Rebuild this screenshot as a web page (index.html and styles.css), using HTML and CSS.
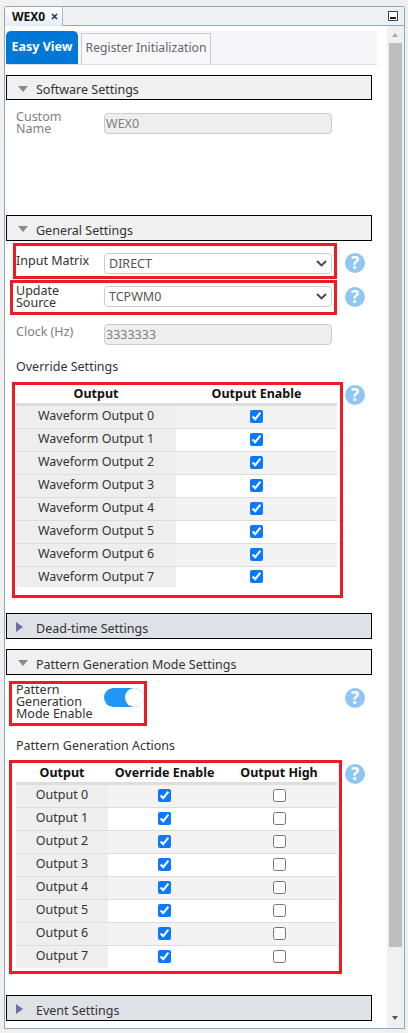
FILE: index.html
```html
<!DOCTYPE html>
<html lang="en">
<head>
  <meta charset="UTF-8">
  <title>WEX0</title>
  <link rel="stylesheet" href="styles.css">
</head>
<body>
  <div class="frame">
    <div class="tabbar">
      <div class="doc-tab">
        <span>WEX0</span>
        <svg class="doc-close" width="7" height="7" viewBox="0 0 7 7"><path d="M1 1l5 5M6 1l-5 5" stroke="#333" stroke-width="1.6"/></svg>
      </div>
      <svg class="minimize" width="10" height="10" viewBox="0 0 10 10"><rect x="0.5" y="0.5" width="9" height="9" fill="#fff" stroke="#444"/><rect x="2" y="6" width="6" height="2" fill="#222"/></svg>
    </div>

    <div class="body">
      <div class="content">
        <div class="view-tabs">
          <div class="view-tab active">Easy View</div>
          <div class="view-tab">Register Initialization</div>
        </div>

        <!-- Software Settings -->
        <div class="section-head first"><span class="arrow-down"></span>Software Settings</div>
        <div class="row custom-row">
          <div class="label muted">Custom<br>Name</div>
          <div class="input">WEX0</div>
        </div>

        <!-- General Settings -->
        <div class="section-head general"><span class="arrow-down"></span>General Settings</div>
        <div class="line line-matrix">
          <div class="marked row mark-matrix">
            <div class="label">Input Matrix</div>
            <div class="select">DIRECT
              <svg width="11" height="7" viewBox="0 0 11 7"><path d="M1 1l4.500 4.500L10 1" fill="none" stroke="#444" stroke-width="1.800"/></svg>
            </div>
          </div>
          <div class="help help-matrix">?</div>
        </div>
        <div class="line line-source">
          <div class="marked row mark-source">
            <div class="label">Update<br>Source</div>
            <div class="select">TCPWM0
              <svg width="11" height="7" viewBox="0 0 11 7"><path d="M1 1l4.500 4.500L10 1" fill="none" stroke="#444" stroke-width="1.800"/></svg>
            </div>
          </div>
          <div class="help help-source">?</div>
        </div>
        <div class="row clock-row">
          <div class="label muted">Clock (Hz)</div>
          <div class="input">3333333</div>
        </div>
        <div class="group-title override-title">Override Settings</div>
        <div class="line">
          <div class="marked mark-override">
            <table class="grid wave-grid">
              <thead><tr><th class="col-name">Output</th><th>Output Enable</th></tr></thead>
              <tbody>
                <tr><td class="col-name">Waveform Output 0</td><td><input type="checkbox" checked></td></tr>
                <tr><td class="col-name">Waveform Output 1</td><td><input type="checkbox" checked></td></tr>
                <tr><td class="col-name">Waveform Output 2</td><td><input type="checkbox" checked></td></tr>
                <tr><td class="col-name">Waveform Output 3</td><td><input type="checkbox" checked></td></tr>
                <tr><td class="col-name">Waveform Output 4</td><td><input type="checkbox" checked></td></tr>
                <tr><td class="col-name">Waveform Output 5</td><td><input type="checkbox" checked></td></tr>
                <tr><td class="col-name">Waveform Output 6</td><td><input type="checkbox" checked></td></tr>
                <tr class="short"><td class="col-name">Waveform Output 7</td><td><input type="checkbox" checked></td></tr>
              </tbody>
            </table>
          </div>
          <div class="help help-override">?</div>
        </div>

        <!-- Dead-time Settings -->
        <div class="section-head closed deadtime"><span class="arrow-right"></span>Dead-time Settings</div>

        <!-- Pattern Generation -->
        <div class="section-head pattern"><span class="arrow-down"></span>Pattern Generation Mode Settings</div>
        <div class="line line-pattern">
          <div class="marked row mark-pattern">
            <div class="label">Pattern<br>Generation<br>Mode Enable</div>
            <div class="toggle"><span class="knob"></span></div>
          </div>
          <div class="help help-pattern">?</div>
        </div>
        <div class="group-title actions-title">Pattern Generation Actions</div>
        <div class="line">
          <div class="marked mark-actions">
            <table class="grid action-grid">
              <thead><tr><th class="col-name">Output</th><th class="col-mid">Override Enable</th><th>Output High</th></tr></thead>
              <tbody>
                <tr><td class="col-name">Output 0</td><td class="col-mid"><input type="checkbox" checked></td><td><input type="checkbox"></td></tr>
                <tr><td class="col-name">Output 1</td><td class="col-mid"><input type="checkbox" checked></td><td><input type="checkbox"></td></tr>
                <tr><td class="col-name">Output 2</td><td class="col-mid"><input type="checkbox" checked></td><td><input type="checkbox"></td></tr>
                <tr><td class="col-name">Output 3</td><td class="col-mid"><input type="checkbox" checked></td><td><input type="checkbox"></td></tr>
                <tr><td class="col-name">Output 4</td><td class="col-mid"><input type="checkbox" checked></td><td><input type="checkbox"></td></tr>
                <tr><td class="col-name">Output 5</td><td class="col-mid"><input type="checkbox" checked></td><td><input type="checkbox"></td></tr>
                <tr><td class="col-name">Output 6</td><td class="col-mid"><input type="checkbox" checked></td><td><input type="checkbox"></td></tr>
                <tr><td class="col-name">Output 7</td><td class="col-mid"><input type="checkbox" checked></td><td><input type="checkbox"></td></tr>
              </tbody>
            </table>
          </div>
          <div class="help help-actions">?</div>
        </div>

        <!-- Event Settings -->
        <div class="section-head closed event"><span class="arrow-right"></span>Event Settings</div>
      </div>

      <div class="scrollbar">
        <span class="scroll-up"></span>
        <div class="thumb"></div>
        <span class="scroll-down"></span>
      </div>
    </div>
  </div>
</body>
</html>
```

FILE: styles.css
```css
* {
    box-sizing: border-box;
}
html, body {
    margin: 0;
    height: 100%;
}
body {
    padding: 6px 3px 4px 4px;
    background-color: #f0f0f0;
    font-family: "Noto Sans", "Open Sans", sans-serif;
    font-size: 12.5px;
    color: #333;
    overflow: hidden;
}
.frame {
    height: 1023px;
    display: flex;
    flex-direction: column;
    background-color: #fff;
    border: 1px solid #8ba9bf;
    border-radius: 2px 2px 0 0;
}

/* top tab bar */
.tabbar {
    height: 19px;
    display: flex;
    justify-content: space-between;
    align-items: center;
    padding-right: 6px;
    background-color: #f0f0f0;
    border-bottom: 1px solid #8ba9bf;
}
.doc-tab {
    width: 58px;
    height: 19px;
    display: flex;
    align-items: center;
    justify-content: space-between;
    padding: 0 4px 0 7px;
    background: linear-gradient(#fff, #e6ecf6);
    border-right: 1px solid #a9bccb;
    font-size: 12px;
    font-weight: bold;
    color: #111;
}
.doc-close {
    margin-top: 1px;
}

.body {
    flex: 1;
    display: flex;
    justify-content: space-between;
    min-height: 0;
}
.content {
    width: 372px;
    padding: 5px 0 0 1px;
}

/* Easy View / Register tabs */
.view-tabs {
    width: 371px;
    height: 34px;
    display: flex;
    align-items: flex-end;
    gap: 3px;
    background-color: #f6f6f8;
    border-bottom: 1px solid #dde1e6;
}
.view-tab {
    width: 130px;
    height: 31px;
    line-height: 27px;
    text-align: center;
    font-size: 12.2px;
    color: #666;
    background-color: #f8f8fb;
    border: 1px solid #ccc;
    border-bottom: none;
}
.view-tab.active {
    width: 72px;
    height: 33px;
    line-height: 31px;
    font-size: 12.5px;
    font-weight: bold;
    color: #fff;
    background-color: #0078d7;
    border: none;
    border-radius: 5px 5px 0 0;
}

/* collapsible headers */
.section-head {
    width: 366px;
    height: 26px;
    line-height: 30px;
    padding-left: 29px;
    position: relative;
    background-color: #f0f0f0;
    border: 1px solid #000;
    color: #333;
}
.section-head.closed {
    background-color: #dee1e6;
}
.section-head.first {
    height: 25px;
    line-height: 28px;
    margin-top: 10px;
}
.section-head.general {
    margin-top: 81px;
}
.section-head.deadtime {
    margin-top: 15px;
}
.section-head.pattern {
    margin-top: 10px;
}
.section-head.event {
    margin-top: 21px;
}
.arrow-down {
    position: absolute;
    left: 11px;
    top: 10px;
    border-left: 5px solid transparent;
    border-right: 5px solid transparent;
    border-top: 6px solid #8a8a8a;
}
.arrow-right {
    position: absolute;
    left: 9px;
    top: 8px;
    border-top: 5px solid transparent;
    border-bottom: 5px solid transparent;
    border-left: 7px solid #6d6dab;
}

/* form rows */
.row {
    display: flex;
    align-items: flex-start;
}
.line {
    width: 359px;
    display: flex;
    align-items: flex-start;
    justify-content: space-between;
}
.label {
    width: 88px;
    flex-shrink: 0;
    line-height: 12px;
}
.muted {
    color: #808080;
}
.input {
    width: 228px;
    height: 21px;
    margin-top: 3px;
    padding-left: 1px;
    line-height: 20px;
    color: #808080;
    background-color: #eee;
    border: 1px solid #ccc;
    border-radius: 4px;
}
.select {
    width: 228px;
    height: 21px;
    display: flex;
    justify-content: space-between;
    align-items: center;
    padding: 0 4px;
    color: #555;
    background-color: #fff;
    border: 1px solid #ccc;
    border-radius: 4px;
}
.custom-row {
    height: 24px;
    margin: 10px 0 0 10px;
}
.custom-row .label {
    padding-top: 1px;
}
.clock-row {
    margin: 9px 0 0 10px;
    height: 21px;
}
.clock-row .label {
    padding-top: 2px;
}
.clock-row .input {
    margin-top: 0;
}

/* red marks */
.marked {
    border: 3px solid #ed1c24;
}
.line-matrix {
    margin-top: 2px;
}
.mark-matrix {
    width: 324px;
    height: 36px;
    margin-left: 7px;
    padding-top: 7px;
}
.mark-matrix .label {
    padding-top: 2px;
}
.line-source {
    margin-top: 1px;
}
.mark-source {
    width: 327px;
    height: 35px;
    margin-left: 4px;
    padding: 3px 0 0 3px;
}
.mark-source .label {
    margin-top: -1px;
}
.mark-override {
    width: 331px;
    height: 216px;
    margin-left: 6px;
    padding-left: 1px;
}
.line-pattern {
    margin-top: 6px;
}
.mark-pattern {
    width: 138px;
    height: 45px;
    margin-left: 3px;
    padding-left: 4px;
}
.mark-actions {
    width: 333px;
    height: 214px;
    margin-left: 3px;
    padding: 1px 0 0 4px;
}

.group-title {
    height: 20px;
    line-height: 20px;
    padding-left: 10px;
}
.override-title {
    margin: 12px 0 5px;
}
.actions-title {
    margin: 10px 0 4px;
}

/* help bubbles */
.help {
    width: 20px;
    height: 20px;
    flex-shrink: 0;
    border-radius: 50%;
    background-color: #90c6f2;
    color: #fff;
    font-size: 17px;
    font-weight: bold;
    line-height: 20px;
    text-align: center;
}
.help-matrix {
    margin-top: 10px;
}
.help-source {
    margin-top: 7px;
}
.help-override {
    margin-top: 3px;
}
.help-pattern {
    margin-top: 7px;
}
.help-actions {
    margin-top: 4px;
}

/* toggle */
.toggle {
    width: 40px;
    height: 19px;
    margin-top: 4px;
    position: relative;
    background-color: #2196f3;
    border-radius: 10px;
}
.knob {
    position: absolute;
    right: 0;
    top: 0;
    width: 19px;
    height: 19px;
    background-color: #fff;
    border-radius: 50%;
}

/* tables */
.grid {
    width: 321px;
    table-layout: fixed;
    border-collapse: separate;
    border-spacing: 0;
}
.grid th {
    height: 21px;
    padding: 0 0 2px;
    line-height: 15px;
    text-align: center;
    font-weight: bold;
    color: #111;
    border-bottom: 3px solid #ddd;
}
.grid td {
    height: 23px;
    padding: 0 0 2px;
    line-height: 15px;
    text-align: center;
    border-bottom: 1px solid #ddd;
}
.grid td.col-name {
    padding-bottom: 3px;
}
.grid tbody tr:nth-child(odd) td {
    background-color: #f3f3f3;
}
.grid tbody tr td.col-name {
    background-color: #eee;
}
.grid tr:last-child td {
    height: 22px;
    border-bottom: none;
}
.grid tr.short td,
.grid tr.short td.col-name {
    height: 20px;
    padding: 0 0 2px;
}
.wave-grid .col-name {
    width: 160px;
}
.action-grid .col-name {
    width: 92px;
}
.action-grid .col-mid {
    width: 113px;
}
.grid input {
    display: block;
    margin: 0 auto;
    width: 13px;
    height: 13px;
    accent-color: #0a78ff;
}

/* scrollbar */
.scrollbar {
    width: 17px;
    position: relative;
    background-color: #f0f0f0;
    padding: 17px 2px 0;
}
.thumb {
    height: 904px;
    background-color: #bdbdbd;
}
.scroll-up {
    position: absolute;
    top: 7px;
    left: 5px;
    border-left: 3.5px solid transparent;
    border-right: 3.5px solid transparent;
    border-bottom: 4px solid #aaa;
}
.scroll-down {
    position: absolute;
    bottom: 8px;
    left: 5px;
    border-left: 3.5px solid transparent;
    border-right: 3.5px solid transparent;
    border-top: 4px solid #555;
}
```
